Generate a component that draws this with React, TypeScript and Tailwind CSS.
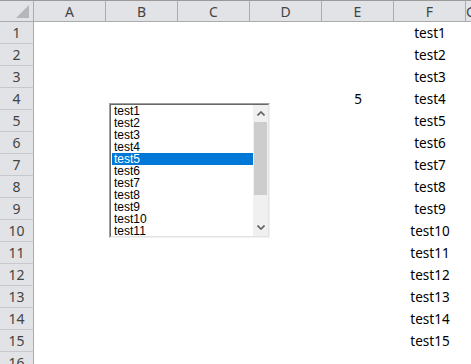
const COLS = ["A", "B", "C", "D", "E", "F", "G"];
const ROWS = Array.from({ length: 16 }, (_, i) => i + 1);
const ITEMS = Array.from({ length: 11 }, (_, i) => `test${i + 1}`);

function cellText(row: number, col: string) {
  if (col === "F" && row <= 15) return `test${row}`;
  if (col === "E" && row === 4) return "5";
  return "";
}

function ListBox() {
  return (
    <div className="absolute left-[109px] top-[103px] flex h-[135px] w-[161px] border-l border-t border-[#a0a0a0] border-b border-r border-b-[#f0f0f0] border-r-[#f0f0f0]">
      <div className="flex flex-1 border-l border-t border-[#696969] border-b border-r border-b-[#e3e3e3] border-r-[#e3e3e3] bg-white">
        <ul className="flex-1 pl-[1px] pt-0 font-['Liberation_Sans',sans-serif] text-[12px] leading-[12px] text-black">
          {ITEMS.map((t) => (
            <li
              key={t}
              className={`h-[12px] pl-[2px] ${t === "test5" ? "bg-[#0078d7] text-white" : ""}`}
            >
              {t}
            </li>
          ))}
        </ul>
        <div className="flex w-[15px] flex-col bg-[#f0f0f0]">
          <div className="flex h-[17px] items-center justify-center">
            <svg width="8" height="5" viewBox="0 0 8 5">
              <path d="M0.5 4.5 L4 1 L7.5 4.5" fill="none" stroke="#606060" strokeWidth="1.6" />
            </svg>
          </div>
          <div className="mx-[1px] h-[73px] bg-[#cdcdcd]" />
          <div className="flex-1" />
          <div className="flex h-[17px] items-center justify-center">
            <svg width="8" height="5" viewBox="0 0 8 5">
              <path d="M0.5 0.5 L4 4 L7.5 0.5" fill="none" stroke="#606060" strokeWidth="1.6" />
            </svg>
          </div>
        </div>
      </div>
    </div>
  );
}

export default function App() {
  return (
    <div className="relative h-[364px] w-[471px] overflow-hidden bg-white font-['Noto_Sans',sans-serif]">
      <div className="grid grid-cols-[34px_repeat(6,72px)_1fr] grid-rows-[22px_repeat(16,22px)]">
        <div className="relative border-b border-r border-t border-[#ababab] border-t-[#9a9a9a] bg-[#e1e3e6]">
          <svg className="absolute bottom-[3px] right-[4px]" width="13" height="13" viewBox="0 0 13 13">
            <path d="M13 0 L13 13 L0 13 Z" fill="#b4b6b9" />
          </svg>
        </div>
        {COLS.map((c) => (
          <div
            key={c}
            className="flex items-center justify-center border-b border-r border-t border-[#ababab] border-t-[#9a9a9a] bg-[#e1e3e6] text-[14px] text-[#444]"
          >
            {c}
          </div>
        ))}
        {ROWS.map((r) => (
          <div key={r} className="contents">
            <div className="flex items-center justify-center border-b border-r border-[#ababab] border-b-[#c6c8cb] bg-[#e1e3e6] text-[14px] text-[#444]">
              {r}
            </div>
            {COLS.map((c) => (
              <div
                key={c}
                className="flex items-center justify-center text-[13.5px] text-black"
              >
                {cellText(r, c)}
              </div>
            ))}
          </div>
        ))}
      </div>
      <ListBox />
    </div>
  );
}
